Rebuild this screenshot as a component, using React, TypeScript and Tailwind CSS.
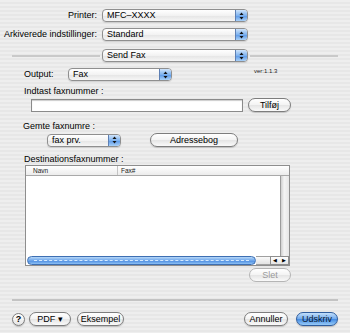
import React from "react";

function PopupArrows() {
  return (
    <svg width="5" height="8" viewBox="0 0 5 8">
      <path d="M2.5 0.5 L4.5 3 L0.5 3 Z" fill="#111" />
      <path d="M2.5 7.5 L4.5 5 L0.5 5 Z" fill="#111" />
    </svg>
  );
}

function Popup({ label, width }: { label: string; width: string }) {
  return (
    <div
      className={`${width} flex h-[13px] overflow-hidden rounded-[4px] border border-[#8f8f8f] bg-[linear-gradient(#ffffff,#f1f1f1_55%,#e6e6e6_56%,#f6f6f6)] shadow-[0_1px_1px_rgba(0,0,0,0.12)]`}
    >
      <span className="flex-1 truncate pl-[4px] leading-[11px]">{label}</span>
      <span className="flex w-[12px] items-center justify-center border-l border-[#5d7fb3] bg-[linear-gradient(#cfe4fb,#7fb3ef_50%,#5896e6_51%,#a9d1f8)]">
        <PopupArrows />
      </span>
    </div>
  );
}

function AquaButton({
  label,
  width,
  disabled = false,
}: {
  label: React.ReactNode;
  width: string;
  disabled?: boolean;
}) {
  return (
    <div
      className={`${width} flex h-[14px] items-center justify-center rounded-full border bg-[linear-gradient(#ffffff,#f3f3f3_50%,#e4e4e4_51%,#fafafa)] leading-none ${
        disabled
          ? "border-[#b5b5b5] text-[#9a9a9a]"
          : "border-[#7d7d7d] text-black shadow-[0_1px_1px_rgba(0,0,0,0.18)]"
      }`}
    >
      {label}
    </div>
  );
}

export default function App() {
  return (
    <div className="flex h-[333px] w-[350px] flex-col overflow-hidden bg-[repeating-linear-gradient(180deg,#eeeeee_0px,#eeeeee_2px,#e7e7e7_2px,#e7e7e7_4px)] font-['Liberation_Sans',Arial,sans-serif] text-[9px] text-black">
      {/* printer + presets */}
      <div className="mt-[9px] flex h-[13px] items-center">
        <span className="w-[97px] text-right">Printer:</span>
        <div className="ml-[5px]">
          <Popup label="MFC–XXXX" width="w-[146px]" />
        </div>
      </div>
      <div className="mt-[6px] flex h-[13px] items-center">
        <span className="w-[97px] text-right">Arkiverede indstillinger:</span>
        <div className="ml-[5px]">
          <Popup label="Standard" width="w-[146px]" />
        </div>
      </div>
      <div className="mt-[8px] flex h-[13px] items-center">
        <div className="ml-[12px] h-[2px] w-[88px] bg-[#c9c9c9]" />
        <div className="ml-[2px]">
          <Popup label="Send Fax" width="w-[146px]" />
        </div>
        <div className="ml-[2px] h-[2px] w-[88px] bg-[#c9c9c9]" />
      </div>

      {/* output */}
      <div className="mt-[6px] flex h-[13px] items-start pl-[24px]">
        <span className="w-[44px] leading-[13px]">Output:</span>
        <Popup label="Fax" width="w-[104px]" />
        <span className="ml-[82px] text-[6px] leading-[7px] text-[#222]">ver:1.1.3</span>
      </div>

      <div className="mt-[5px] pl-[24px] leading-[11px]">Indtast faxnummer :</div>
      <div className="mt-[1px] flex h-[14px] items-center pl-[31px]">
        <div className="h-[13px] w-[212px] border border-[#8a8a8a] bg-white shadow-[inset_0_1px_1px_rgba(0,0,0,0.2)]" />
        <div className="ml-[5px]">
          <AquaButton label="Tilføj" width="w-[43px]" />
        </div>
      </div>

      <div className="mt-[9px] pl-[23px] leading-[11px]">Gemte faxnumre :</div>
      <div className="mt-[1px] flex h-[14px] items-center pl-[47px]">
        <Popup label="fax prv." width="w-[74px]" />
        <div className="ml-[29px]">
          <AquaButton label="Adressebog" width="w-[88px]" />
        </div>
      </div>

      <div className="mt-[7px] pl-[24px] leading-[11px]">Destinationsfaxnummer :</div>

      {/* table */}
      <div className="ml-[25px] flex h-[101px] w-[265px] flex-col border border-[#8e8e8e] bg-white">
        <div className="flex h-[10px] border-b border-[#a9a9a9] bg-[linear-gradient(#ffffff,#ececec)] text-[6.5px] leading-[9px] text-[#222]">
          <span className="w-[92px] border-r border-[#c4c4c4] pl-[7px]">Navn</span>
          <span className="pl-[3px]">Fax#</span>
        </div>
        <div className="flex flex-1">
          <div className="flex-1" />
          <div className="w-[9px] border-l border-[#9c9c9c] bg-[linear-gradient(90deg,#cfcfcf,#f4f4f4_40%,#e6e6e6)]" />
        </div>
        <div className="flex h-[9px] items-center">
          <div className="ml-[1px] flex h-[9px] w-[233px] items-center rounded-full border border-[#3d6fb3] bg-[linear-gradient(#b6d7f8,#6ea6ea_50%,#4a8ae0_51%,#8cc0f4)]">
            <div className="mx-[6px] h-0 flex-1 border-t border-dashed border-[#d6ebff]" />
          </div>
          <div className="h-[9px] w-[14px] border-y border-[#a0a0a0] bg-[linear-gradient(#fafafa,#e2e2e2)]" />
          <div className="flex h-[9px] w-[19px] items-center justify-around border border-[#8e8e8e] bg-[linear-gradient(#ffffff,#e4e4e4)] text-[5px] leading-none">
            <span>◀</span>
            <span>▶</span>
          </div>
          <div className="flex-1 bg-white" />
        </div>
      </div>

      <div className="ml-[249px] mt-[2px]">
        <AquaButton label="Slet" width="w-[42px]" disabled />
      </div>

      <div className="ml-[12px] mt-[17px] h-[2px] w-[326px] bg-[#c3c3c3]" />

      {/* bottom buttons */}
      <div className="mt-[11px] flex h-[14px] items-center pl-[12px]">
        <div className="flex h-[13px] w-[13px] items-center justify-center rounded-full border border-[#7d7d7d] bg-[linear-gradient(#ffffff,#e4e4e4)] text-[9px] font-bold leading-none shadow-[0_1px_1px_rgba(0,0,0,0.18)]">
          ?
        </div>
        <div className="ml-[4px]">
          <AquaButton label="PDF ▾" width="w-[42px]" />
        </div>
        <div className="ml-[6px]">
          <AquaButton label="Eksempel" width="w-[47px]" />
        </div>
        <div className="ml-[120px]">
          <AquaButton label="Annuller" width="w-[44px]" />
        </div>
        <div className="ml-[8px] flex h-[14px] w-[42px] items-center justify-center rounded-full border border-[#2f5d9e] bg-[linear-gradient(#c4e0fb,#6fa8ec_50%,#4189e2_51%,#98cbf8)] leading-none text-[#0c1a33] shadow-[0_1px_1px_rgba(0,0,0,0.2)]">
          Udskriv
        </div>
      </div>
    </div>
  );
}
